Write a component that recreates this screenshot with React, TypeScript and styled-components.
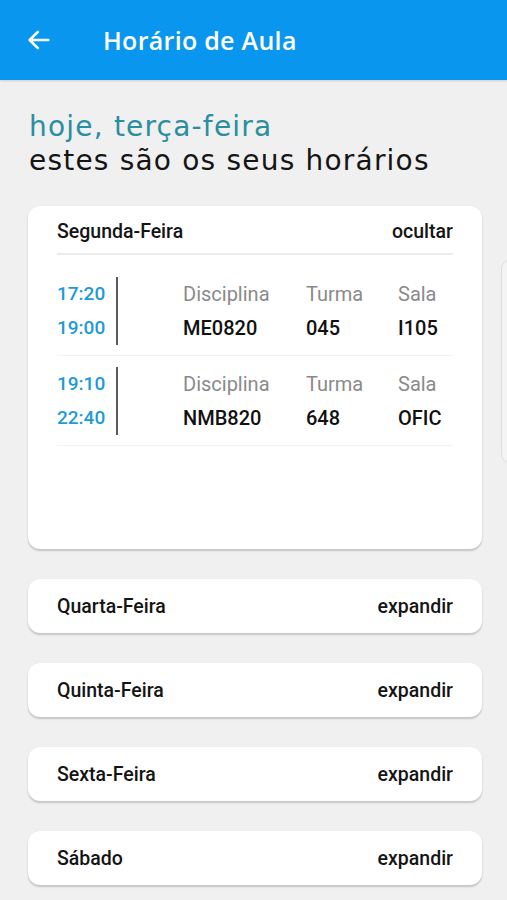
import styled, { createGlobalStyle } from 'styled-components';

const GlobalStyle = createGlobalStyle`
  html, body {
    margin: 0;
    padding: 0;
    background: #f0f0f0;
    overflow-x: hidden;
  }
  * {
    box-sizing: border-box;
  }
`;

type Session = {
  start: string;
  end: string;
  disciplina: string;
  turma: string;
  sala: string;
};

const segunda: Session[] = [
  { start: '17:20', end: '19:00', disciplina: 'ME0820', turma: '045', sala: 'I105' },
  { start: '19:10', end: '22:40', disciplina: 'NMB820', turma: '648', sala: 'OFIC' },
];

const outrosDias = ['Quarta-Feira', 'Quinta-Feira', 'Sexta-Feira', 'Sábado'];

const Screen = styled.div`
  width: 507px;
  min-height: 900px;
  background: #f0f0f0;
  font-family: Roboto, 'Liberation Sans', sans-serif;
`;

const AppBar = styled.header`
  height: 80px;
  background: #0996ee;
  display: flex;
  align-items: center;
  padding-left: 24px;
  box-shadow: 0 1px 2px rgba(0, 0, 0, 0.15);
`;

const BackButton = styled.button`
  width: 30px;
  height: 30px;
  padding: 0;
  border: 0;
  background: none;
  display: flex;
  align-items: center;
  justify-content: center;
  margin-right: 49px;
  cursor: pointer;
`;

const AppTitle = styled.h1`
  margin: 0;
  color: #fff;
  font-family: 'Open Sans', 'Noto Sans', sans-serif;
  font-weight: 600;
  font-size: 25px;
  letter-spacing: 0.3px;
`;

const Greeting = styled.div`
  padding: 30px 29px 28px;
  font-family: 'DejaVu Sans', 'Open Sans', sans-serif;
  font-size: 28px;
  line-height: 34px;
  letter-spacing: 1.2px;
`;

const Today = styled.div`
  color: #2a8ea2;
`;

const Subtitle = styled.div`
  color: #151515;
`;

const Stage = styled.div`
  display: flex;
  align-items: flex-start;
  gap: 19px;
  padding-left: 28px;
`;

const Column = styled.div`
  width: 454px;
  flex-shrink: 0;
  display: flex;
  flex-direction: column;
  gap: 30px;
`;

const Peek = styled.div`
  margin-top: 53px;
  width: 30px;
  height: 205px;
  flex-shrink: 0;
  background: #f4f4f4;
  border: 1px solid #dcdcdc;
  border-radius: 10px 0 0 10px;
`;

const Card = styled.section<{ $open?: boolean }>`
  background: #fff;
  border-radius: 12px;
  padding: 0 29px;
  min-height: ${({ $open }) => ($open ? '343px' : '54px')};
  box-shadow: 0 2px 2px rgba(0, 0, 0, 0.18), 0 0 1px rgba(0, 0, 0, 0.08);
`;

const CardHeader = styled.div<{ $open?: boolean }>`
  height: ${({ $open }) => ($open ? '49px' : '54px')};
  display: flex;
  align-items: center;
  justify-content: space-between;
  padding-top: ${({ $open }) => ($open ? '3px' : '0')};
  border-bottom: ${({ $open }) => ($open ? '2px solid #ececec' : 'none')};
  font-size: 19.5px;
  font-weight: 500;
  color: #141414;
`;

const Toggle = styled.span`
  font-size: 19.5px;
  font-weight: 500;
  color: #141414;
`;

const SessionRow = styled.div<{ $first?: boolean }>`
  display: flex;
  align-items: center;
  padding: ${({ $first }) => ($first ? '22px 0 10px' : '11px 0 10px')};
  border-bottom: 1px solid #f3f3f3;
`;

const Times = styled.div`
  width: 61px;
  display: flex;
  flex-direction: column;
  border-right: 2px solid #5a5a5a;
`;

const Time = styled.span`
  height: 34px;
  line-height: 34px;
  font-size: 19px;
  font-weight: 500;
  color: #1d9bd8;
`;

const Info = styled.div`
  margin-left: 65px;
  display: grid;
  grid-template-columns: 123px 92px 1fr;
  grid-auto-rows: 34px;
  align-items: center;
  flex: 1;
`;

const Label = styled.span`
  font-size: 20px;
  color: #8a8a8a;
`;

const Value = styled.span`
  font-size: 20px;
  font-weight: 500;
  color: #111;
`;

function BackArrow() {
  return (
    <svg width="28" height="28" viewBox="0 0 24 24" fill="none">
      <path d="M20 12H4.5M11 5l-7 7 7 7" stroke="#fff" strokeWidth="2.2" strokeLinecap="round" strokeLinejoin="round" />
    </svg>
  );
}

export default function App() {
  return (
    <Screen>
      <GlobalStyle />
      <AppBar>
        <BackButton aria-label="voltar">
          <BackArrow />
        </BackButton>
        <AppTitle>Horário de Aula</AppTitle>
      </AppBar>

      <Greeting>
        <Today>hoje, terça-feira</Today>
        <Subtitle>estes são os seus horários</Subtitle>
      </Greeting>

      <Stage>
        <Column>
          <Card $open>
            <CardHeader $open>
              <span>Segunda-Feira</span>
              <Toggle>ocultar</Toggle>
            </CardHeader>
            {segunda.map((s, i) => (
              <SessionRow key={s.start} $first={i === 0}>
                <Times>
                  <Time>{s.start}</Time>
                  <Time>{s.end}</Time>
                </Times>
                <Info>
                  <Label>Disciplina</Label>
                  <Label>Turma</Label>
                  <Label>Sala</Label>
                  <Value>{s.disciplina}</Value>
                  <Value>{s.turma}</Value>
                  <Value>{s.sala}</Value>
                </Info>
              </SessionRow>
            ))}
          </Card>
          {outrosDias.map((dia) => (
            <Card key={dia}>
              <CardHeader>
                <span>{dia}</span>
                <Toggle>expandir</Toggle>
              </CardHeader>
            </Card>
          ))}
        </Column>
        <Peek />
      </Stage>
    </Screen>
  );
}
